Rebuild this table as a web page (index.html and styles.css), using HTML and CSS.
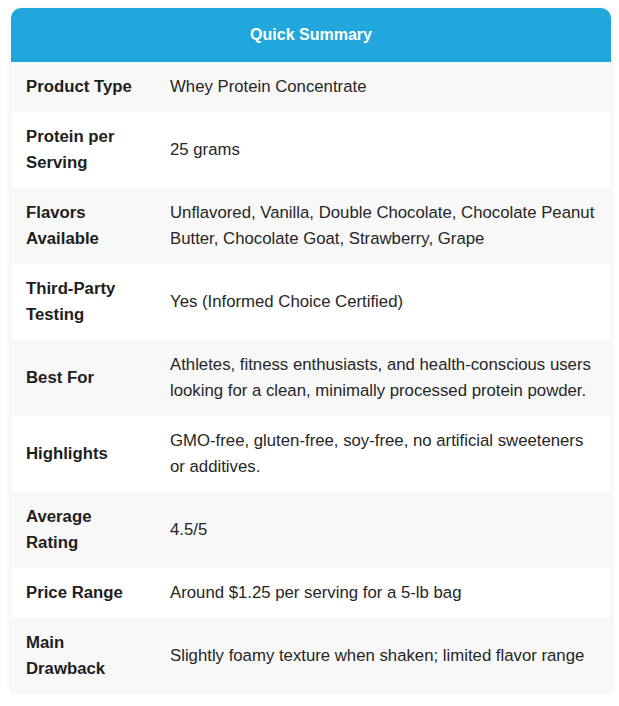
FILE: index.html
```html
<!DOCTYPE html>
<html lang="en">
<head>
<meta charset="utf-8">
<title>Quick Summary</title>
<link rel="stylesheet" href="styles.css">
</head>
<body>
<div class="card">
  <div class="card-head">Quick Summary</div>
  <div class="row alt"><div class="label">Product Type</div><div class="value">Whey Protein Concentrate</div></div>
  <div class="row"><div class="label">Protein per Serving</div><div class="value">25 grams</div></div>
  <div class="row alt"><div class="label">Flavors Available</div><div class="value">Unflavored, Vanilla, Double Chocolate, Chocolate Peanut Butter, Chocolate Goat, Strawberry, Grape</div></div>
  <div class="row"><div class="label">Third-Party Testing</div><div class="value">Yes (Informed Choice Certified)</div></div>
  <div class="row alt"><div class="label">Best For</div><div class="value">Athletes, fitness enthusiasts, and health-conscious users looking for a clean, minimally processed protein powder.</div></div>
  <div class="row"><div class="label">Highlights</div><div class="value">GMO-free, gluten-free, soy-free, no artificial sweeteners or additives.</div></div>
  <div class="row alt"><div class="label">Average Rating</div><div class="value">4.5/5</div></div>
  <div class="row"><div class="label">Price Range</div><div class="value">Around $1.25 per serving for a 5-lb bag</div></div>
  <div class="row alt"><div class="label">Main Drawback</div><div class="value">Slightly foamy texture when shaken; limited flavor range</div></div>
</div>
</body>
</html>
```
FILE: styles.css
```css
html, body {
  margin: 0;
  padding: 0;
  background: #ffffff;
}
body {
  font-family: "Liberation Sans", Arial, sans-serif;
  font-size: 16px;
  line-height: 26px;
  color: #222;
}
.card {
  width: 600px;
  margin: 8px 0 0 11px;
  border-radius: 10px;
  overflow: hidden;
  box-shadow: 0 2px 6px rgba(0, 0, 0, 0.09);
  background: #fff;
}
.card-head {
  background: #22a7dd;
  color: #ffffff;
  font-weight: bold;
  text-align: center;
  height: 54px;
  display: flex;
  align-items: center;
  justify-content: center;
}
.row {
  display: grid;
  grid-template-columns: 144px 1fr;
  align-items: center;
  background: #ffffff;
  font-size: 16.75px;
}
.row.alt {
  background: #f8f8f8;
}
.label {
  padding: 12px 15px;
  font-weight: bold;
  color: #1e1e1e;
}
.value {
  padding: 12px 15px;
  color: #262626;
}
```
